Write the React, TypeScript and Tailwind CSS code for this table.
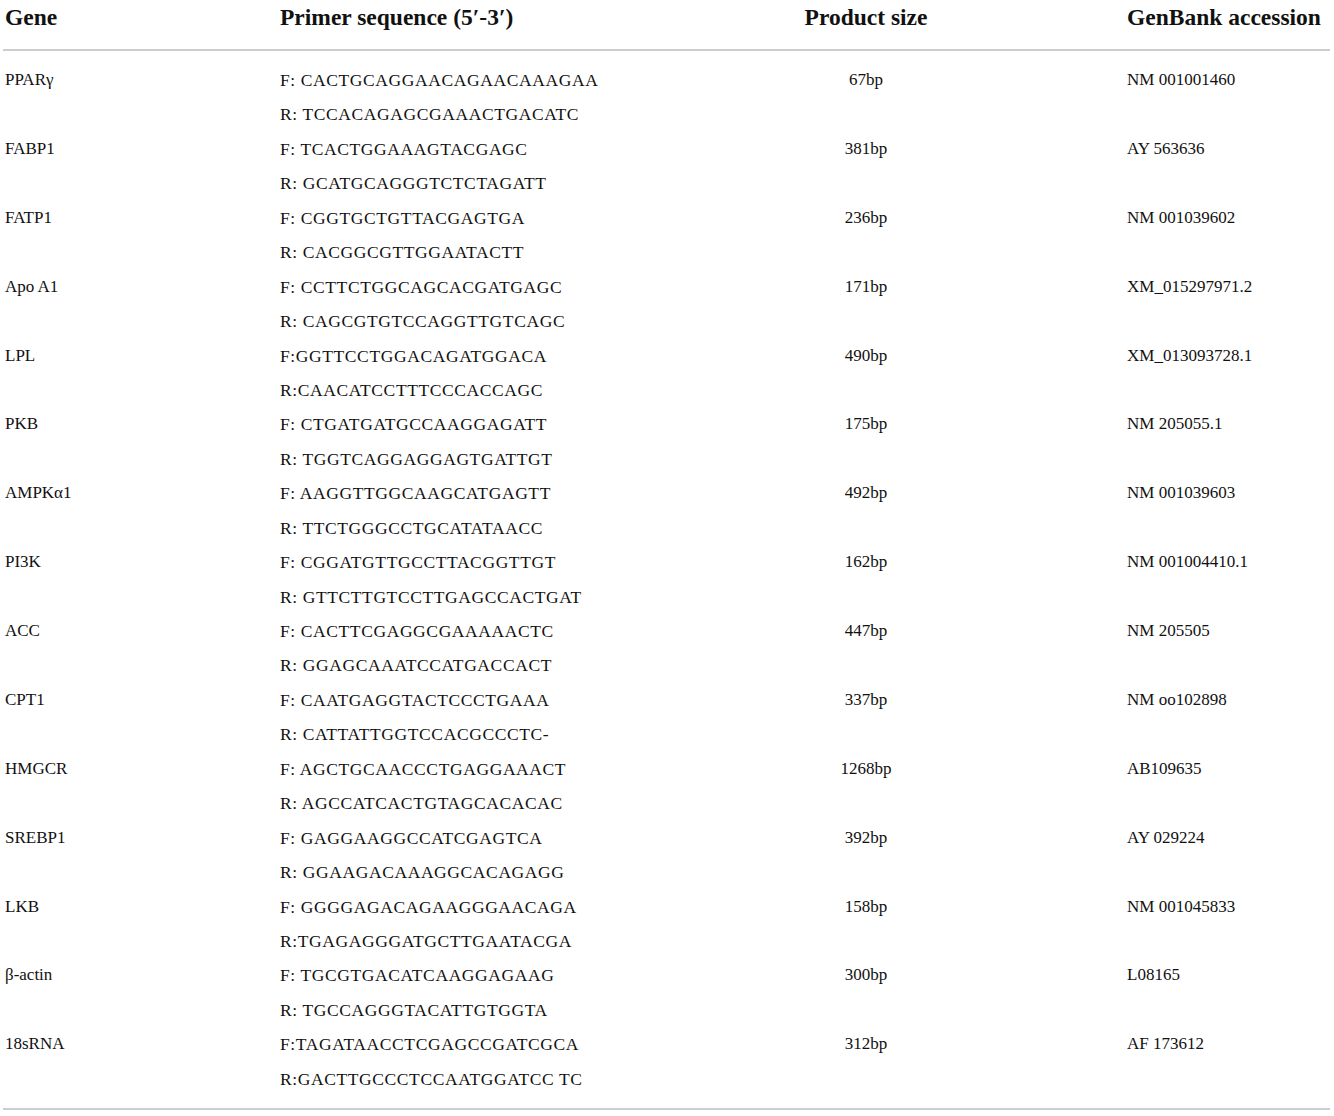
const rows: [string, string, string, string, string][] = [
  ['PPARγ', 'F: CACTGCAGGAACAGAACAAAGAA', 'R: TCCACAGAGCGAAACTGACATC', '67bp', 'NM 001001460'],
  ['FABP1', 'F: TCACTGGAAAGTACGAGC', 'R: GCATGCAGGGTCTCTAGATT', '381bp', 'AY 563636'],
  ['FATP1', 'F: CGGTGCTGTTACGAGTGA', 'R: CACGGCGTTGGAATACTT', '236bp', 'NM 001039602'],
  ['Apo A1', 'F: CCTTCTGGCAGCACGATGAGC', 'R: CAGCGTGTCCAGGTTGTCAGC', '171bp', 'XM_015297971.2'],
  ['LPL', 'F:GGTTCCTGGACAGATGGACA', 'R:CAACATCCTTTCCCACCAGC', '490bp', 'XM_013093728.1'],
  ['PKB', 'F: CTGATGATGCCAAGGAGATT', 'R: TGGTCAGGAGGAGTGATTGT', '175bp', 'NM 205055.1'],
  ['AMPKα1', 'F: AAGGTTGGCAAGCATGAGTT', 'R: TTCTGGGCCTGCATATAACC', '492bp', 'NM 001039603'],
  ['PI3K', 'F: CGGATGTTGCCTTACGGTTGT', 'R: GTTCTTGTCCTTGAGCCACTGAT', '162bp', 'NM 001004410.1'],
  ['ACC', 'F: CACTTCGAGGCGAAAAACTC', 'R: GGAGCAAATCCATGACCACT', '447bp', 'NM 205505'],
  ['CPT1', 'F: CAATGAGGTACTCCCTGAAA', 'R: CATTATTGGTCCACGCCCTC-', '337bp', 'NM oo102898'],
  ['HMGCR', 'F: AGCTGCAACCCTGAGGAAACT', 'R: AGCCATCACTGTAGCACACAC', '1268bp', 'AB109635'],
  ['SREBP1', 'F: GAGGAAGGCCATCGAGTCA', 'R: GGAAGACAAAGGCACAGAGG', '392bp', 'AY 029224'],
  ['LKB', 'F: GGGGAGACAGAAGGGAACAGA', 'R:TGAGAGGGATGCTTGAATACGA', '158bp', 'NM 001045833'],
  ['β-actin', 'F: TGCGTGACATCAAGGAGAAG', 'R: TGCCAGGGTACATTGTGGTA', '300bp', 'L08165'],
  ['18sRNA', 'F:TAGATAACCTCGAGCCGATCGCA', 'R:GACTTGCCCTCCAATGGATCC TC', '312bp', 'AF 173612'],
]

export default function App() {
  return (
    <div className="min-h-screen bg-white text-[#111] font-['Liberation_Serif',serif]">
      <div className="ml-[3px] w-[1327px] border-b-2 border-[#cdcdcd]">
        {/* header */}
        <div className="flex h-[45px] items-start pt-[4px] text-[23.5px] font-bold leading-[26px] border-b-2 border-[#cdcdcd] box-content">
          <div className="w-[277px] pl-[2px]">Gene</div>
          <div className="w-[325px]">Primer sequence (5′-3′)</div>
          <div className="w-[522px] text-center">Product size</div>
          <div className="flex-1">GenBank accession</div>
        </div>

        <div className="pt-[12px] pb-[12px]">
          {rows.map(([gene, fwd, rev, size, acc]) => (
            <div key={gene} className="flex leading-[34.43px]">
              <div className="w-[277px] pl-[2px] text-[17px]">{gene}</div>
              <div className="w-[325px] text-[17.5px] tracking-[0.6px]">
                <div>{fwd}</div>
                <div>{rev}</div>
              </div>
              <div className="w-[522px] text-center text-[17px]">{size}</div>
              <div className="flex-1 text-[17px]">{acc}</div>
            </div>
          ))}
        </div>
      </div>
    </div>
  )
}
